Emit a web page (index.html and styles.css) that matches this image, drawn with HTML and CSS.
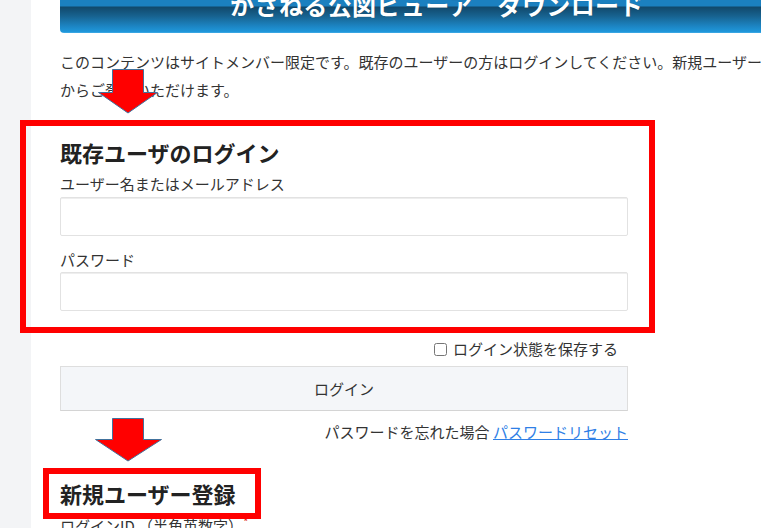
FILE: index.html
```html
<!DOCTYPE html>
<html lang="ja">
<head>
<meta charset="utf-8">
<title>かさねる公図ビューア ダウンロード</title>
<link rel="stylesheet" href="styles.css">
</head>
<body>
<div class="page">
  <aside class="side"></aside>
  <main class="main">
    <div class="content">
      <h1 class="banner">かさねる公図ビューア　ダウンロード</h1>
      <p class="intro">このコンテンツはサイトメンバー限定です。既存のユーザーの方はログインしてください。新規ユーザーの方はからご登録いただけます。</p>

      <div class="form">
        <section class="login annot-box">
          <h2 class="title">既存ユーザのログイン</h2>
          <label class="label">ユーザー名またはメールアドレス</label>
          <div class="input"></div>
          <label class="label label-pw">パスワード</label>
          <div class="input input-pw"></div>
        </section>

        <div class="remember">
          <input type="checkbox" class="check">
          <span>ログイン状態を保存する</span>
        </div>
        <div class="button">ログイン</div>
        <div class="forgot">パスワードを忘れた場合 <a href="#" class="link">パスワードリセット</a></div>

        <h2 class="title title-new annot-box">新規ユーザー登録</h2>
        <div class="label label-id">ログインID （半角英数字）<span class="req">*</span></div>
      </div>
    </div>

    <svg class="arrow arrow-1" width="64" height="48" viewBox="0 0 64 48">
      <path d="M16.5 2.5 H47.5 V25.5 H61.5 L32 46 L2.5 25.5 H16.5 Z" />
    </svg>
    <svg class="arrow arrow-2" width="70" height="48" viewBox="0 0 70 48">
      <path d="M18.5 2.5 H49.5 V23.5 H67.5 L34 45 L1.5 23.5 H18.5 Z" />
    </svg>
  </main>
</div>
</body>
</html>
```

FILE: styles.css
```css
html, body {
  margin: 0;
  padding: 0;
  overflow: hidden;
  background: #ffffff;
}

body {
  font-family: "Noto Sans CJK JP", "Noto Sans", "Liberation Sans", sans-serif;
  color: #333333;
  font-size: 15px;
}

.page {
  display: flex;
  min-height: 100vh;
  width: 900px;
}

.side {
  width: 31px;
  flex: 0 0 31px;
  background: #f3f4f6;
}

.main {
  flex: 1;
  position: relative;
  padding-left: 29px;
  background: #ffffff;
}

.content {
  width: 754px;
}

.banner {
  margin: -20px 0 0;
  height: 53px;
  line-height: 50px;
  text-align: center;
  font-size: 24px;
  font-weight: 700;
  letter-spacing: 0.4px;
  color: #ffffff;
  border-radius: 0 0 4px 4px;
  background: linear-gradient(to bottom,
    #1b80c0 0px, #1b80c0 26px,
    #11486b 27px, #17628f 36px, #1c84c2 46px, #1f98dc 52px, #4fb2e8 53px);
  text-shadow: 0 0 1px rgba(0,0,0,0.3);
}

.intro {
  margin: 15px 0 0;
  line-height: 28px;
  font-size: 15px;
  color: #333333;
}

.form {
  width: 568px;
}

.annot-box {
  position: relative;
}

.annot-box::before {
  content: "";
  position: absolute;
  border: 6px solid #ff0000;
  pointer-events: none;
}

.login {
  margin-top: 33px;
}

.login::before {
  top: -17px;
  left: -40px;
  right: -27px;
  bottom: -22px;
}

.title {
  margin: 0;
  font-size: 22px;
  line-height: 30px;
  font-weight: 700;
  color: #222222;
}

.label {
  display: block;
  margin-top: 6px;
  line-height: 22px;
  font-size: 15px;
  color: #333333;
}

.label-pw {
  margin-top: 13px;
}

.input {
  margin-top: 2px;
  height: 37px;
  border: 1px solid #e2e2e2;
  border-radius: 2px;
  background: #ffffff;
  box-shadow: inset 0 1px 0 #eeeeee;
}

.input-pw {
  margin-top: 1px;
}

.remember {
  margin-top: 27px;
  margin-right: 10px;
  display: flex;
  justify-content: flex-end;
  align-items: center;
  gap: 6px;
  line-height: 22px;
  font-size: 15px;
  color: #333333;
}

.check {
  margin: 0;
  width: 13px;
  height: 13px;
}

.button {
  margin-top: 6px;
  height: 43px;
  line-height: 43px;
  text-align: center;
  font-size: 15px;
  color: #333333;
  background: #f4f6f9;
  border: 1px solid #dedede;
  border-bottom-color: #d4d4d4;
}

.forgot {
  margin-top: 10px;
  text-align: right;
  line-height: 22px;
  font-size: 15px;
  color: #333333;
}

.link {
  color: #2f7fe6;
  text-decoration: underline;
}

.title-new {
  display: inline-block;
  margin-top: 34px;
  line-height: 33px;
}

.title-new::before {
  top: -9px;
  left: -17px;
  right: -25px;
  bottom: -9px;
}

.label-id {
  margin-top: 5px;
}

.req {
  color: #e0301e;
  font-size: 12px;
  vertical-align: top;
  line-height: 14px;
}

.arrow {
  position: absolute;
  overflow: visible;
}

.arrow path {
  fill: #ff0000;
  stroke: #41719c;
  stroke-width: 1;
}

.arrow-1 {
  left: 65px;
  top: 67px;
}

.arrow-2 {
  left: 63px;
  top: 416px;
}
```
